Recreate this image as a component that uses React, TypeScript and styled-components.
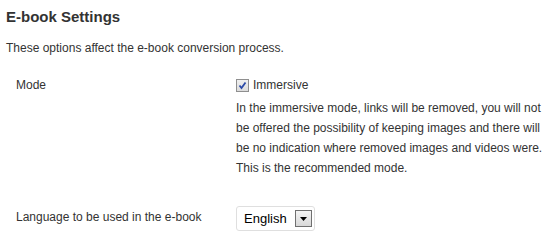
import React from "react";
import styled, { createGlobalStyle } from "styled-components";

const Global = createGlobalStyle`
  html, body { margin: 0; padding: 0; background: #ffffff; }
  body { font-family: "Liberation Sans", Arial, sans-serif; color: #333333; font-size: 12px; }
`;

const Page = styled.div`
  padding: 8px 6px 0 6px;
`;

const Title = styled.h3`
  margin: 0;
  font-size: 15px;
  font-weight: bold;
  line-height: 18px;
  color: #333333;
`;

const Intro = styled.p`
  margin: 13px 0 0 0;
  font-size: 12px;
  line-height: 18px;
`;

const Table = styled.div`
  display: grid;
  grid-template-columns: 220px 1fr;
  margin-top: 9px;
`;

const Label = styled.div<{ $top?: number }>`
  padding: ${(p) => p.$top ?? 10}px 10px 10px 10px;
  font-size: 12px;
  line-height: 18px;
`;

const Cell = styled.div<{ $top?: number }>`
  padding: ${(p) => p.$top ?? 10}px 10px 10px 10px;
`;

const CheckRow = styled.label`
  display: flex;
  align-items: center;
  gap: 4px;
  font-size: 12px;
  line-height: 18px;
`;

const Box = styled.span`
  width: 11px;
  height: 11px;
  border: 1px solid #8f8f8f;
  background: linear-gradient(#f0f0f0, #dcdcdc);
  display: inline-flex;
  align-items: center;
  justify-content: center;
`;

const Description = styled.p`
  margin: 4px 0 0 0;
  font-size: 12px;
  line-height: 20px;
  width: 312px;
`;

const Select = styled.div`
  display: inline-flex;
  align-items: center;
  height: 25px;
  box-sizing: border-box;
  border: 1px solid #dfdfdf;
  border-radius: 3px;
  background: #fff;
  padding: 0 2px 0 7px;
  gap: 8px;
  font-size: 13px;
  color: #000;
`;

const Arrow = styled.span`
  width: 17px;
  height: 17px;
  box-sizing: border-box;
  border: 1px solid #707070;
  background: linear-gradient(#f4f4f4, #d8d8d8);
  display: inline-flex;
  align-items: center;
  justify-content: center;
`;

export default function App() {
  return (
    <>
      <Global />
      <Page>
        <Title>E-book Settings</Title>
        <Intro>These options affect the e-book conversion process.</Intro>
        <Table>
          <Label>Mode</Label>
          <Cell>
            <CheckRow>
              <Box>
                <svg width="9" height="9" viewBox="0 0 9 9">
                  <path d="M1.5 4.5 L3.5 7 L7.5 1.5" stroke="#2b4aa8" strokeWidth="1.8" fill="none" />
                </svg>
              </Box>
              Immersive
            </CheckRow>
            <Description>
              In the immersive mode, links will be removed, you will not be offered the possibility of keeping images and there will be no indication where removed images and videos were. This is the recommended mode.
            </Description>
          </Cell>
          <Label $top={20}>Language to be used in the e-book</Label>
          <Cell $top={18}>
            <Select>
              English
              <Arrow>
                <svg width="7" height="4" viewBox="0 0 7 4">
                  <path d="M0 0 H7 L3.5 4 Z" fill="#000" />
                </svg>
              </Arrow>
            </Select>
          </Cell>
        </Table>
      </Page>
    </>
  );
}
